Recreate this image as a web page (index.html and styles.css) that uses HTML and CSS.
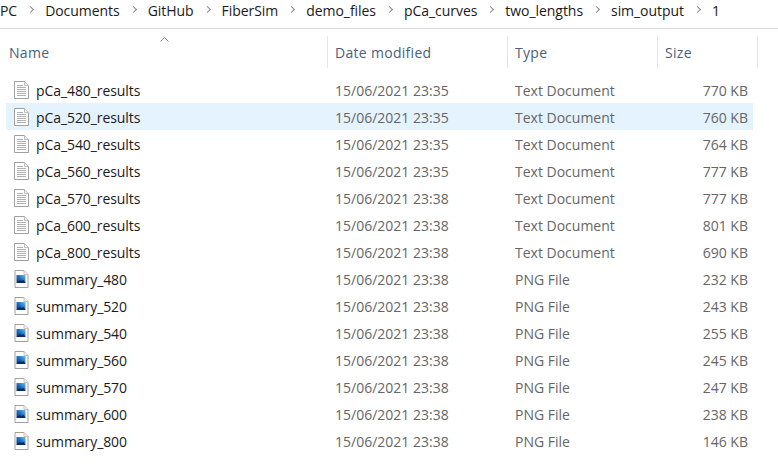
FILE: index.html
```html
<!DOCTYPE html>
<html lang="en">
<head>
    <meta charset="UTF-8">
    <meta name="viewport" content="width=device-width, initial-scale=1.0">
    <title>1</title>
    <link rel="stylesheet" href="styles.css">
</head>
<body>
    <svg class="defs" width="0" height="0">
        <defs>
            <linearGradient id="pic" x1="1" y1="0" x2="0" y2="1">
                <stop offset="0" stop-color="#6cc4f0"/>
                <stop offset=".5" stop-color="#1c6fbe"/>
                <stop offset="1" stop-color="#0b2f74"/>
            </linearGradient>
        </defs>
        <symbol id="txt" viewBox="0 0 15 18">
            <path d="M.5.5h10l4 4v13H.5z" fill="#fff" stroke="#a0a0a0"/>
            <path d="M10.5.5v4h4" fill="#f0f0f0" stroke="#bdbdbd"/>
            <path d="M3 4.5h6M3 6.5h9M3 8.5h9M3 10.5h9M3 12.5h9M3 14.5h9" stroke="#b0b0b0" fill="none"/>
        </symbol>
        <symbol id="png" viewBox="0 0 14 18">
            <path d="M.5.5h9l4 4v13H.5z" fill="#fff" stroke="#a0a0a0"/>
            <path d="M9.5.5v4h4" fill="#f0f0f0" stroke="#c4c4c4"/>
            <rect x="2" y="5" width="9" height="8" fill="url(#pic)"/>
            <path d="M2 13l3-3 2 1 2-1 2 3z" fill="#0a2a66"/>
        </symbol>
    </svg>

    <nav class="crumbs">
        <span>PC</span><i class="chev"></i>
        <span>Documents</span><i class="chev"></i>
        <span>GitHub</span><i class="chev"></i>
        <span>FiberSim</span><i class="chev"></i>
        <span>demo_files</span><i class="chev"></i>
        <span>pCa_curves</span><i class="chev"></i>
        <span>two_lengths</span><i class="chev"></i>
        <span>sim_output</span><i class="chev"></i>
        <span>1</span>
    </nav>

    <div class="head">
        <div class="col name-col">Name<svg class="sort" width="9" height="5"><path d="M.5 4.5l4-4 4 4" fill="none" stroke="#8a8a8a"/></svg></div>
        <div class="col">Date modified</div>
        <div class="col">Type</div>
        <div class="col">Size</div>
    </div>

    <div class="list">
        <div class="row"><svg class="ico"><use href="#txt"/></svg><span class="fname">pCa_480_results</span><span>15/06/2021 23:35</span><span>Text Document</span><span class="size">770 KB</span></div>
        <div class="row selected"><svg class="ico"><use href="#txt"/></svg><span class="fname">pCa_520_results</span><span>15/06/2021 23:35</span><span>Text Document</span><span class="size">760 KB</span></div>
        <div class="row"><svg class="ico"><use href="#txt"/></svg><span class="fname">pCa_540_results</span><span>15/06/2021 23:35</span><span>Text Document</span><span class="size">764 KB</span></div>
        <div class="row"><svg class="ico"><use href="#txt"/></svg><span class="fname">pCa_560_results</span><span>15/06/2021 23:35</span><span>Text Document</span><span class="size">777 KB</span></div>
        <div class="row"><svg class="ico"><use href="#txt"/></svg><span class="fname">pCa_570_results</span><span>15/06/2021 23:38</span><span>Text Document</span><span class="size">777 KB</span></div>
        <div class="row"><svg class="ico"><use href="#txt"/></svg><span class="fname">pCa_600_results</span><span>15/06/2021 23:38</span><span>Text Document</span><span class="size">801 KB</span></div>
        <div class="row"><svg class="ico"><use href="#txt"/></svg><span class="fname">pCa_800_results</span><span>15/06/2021 23:38</span><span>Text Document</span><span class="size">690 KB</span></div>
        <div class="row"><svg class="ico"><use href="#png"/></svg><span class="fname">summary_480</span><span>15/06/2021 23:38</span><span>PNG File</span><span class="size">232 KB</span></div>
        <div class="row"><svg class="ico"><use href="#png"/></svg><span class="fname">summary_520</span><span>15/06/2021 23:38</span><span>PNG File</span><span class="size">243 KB</span></div>
        <div class="row"><svg class="ico"><use href="#png"/></svg><span class="fname">summary_540</span><span>15/06/2021 23:38</span><span>PNG File</span><span class="size">255 KB</span></div>
        <div class="row"><svg class="ico"><use href="#png"/></svg><span class="fname">summary_560</span><span>15/06/2021 23:38</span><span>PNG File</span><span class="size">245 KB</span></div>
        <div class="row"><svg class="ico"><use href="#png"/></svg><span class="fname">summary_570</span><span>15/06/2021 23:38</span><span>PNG File</span><span class="size">247 KB</span></div>
        <div class="row"><svg class="ico"><use href="#png"/></svg><span class="fname">summary_600</span><span>15/06/2021 23:38</span><span>PNG File</span><span class="size">238 KB</span></div>
        <div class="row"><svg class="ico"><use href="#png"/></svg><span class="fname">summary_800</span><span>15/06/2021 23:38</span><span>PNG File</span><span class="size">146 KB</span></div>
    </div>
</body>
</html>
```

FILE: styles.css
```css
body{
    margin: 0;
    background: #fff;
    font-family: "Open Sans", "Noto Sans", sans-serif;
    font-size: 14px;
    color: #1a1a1a;
    overflow: hidden;
}
.defs{
    display: block;
    height: 0;
}
.crumbs{
    height: 29px;
    box-sizing: border-box;
    border-bottom: 1px solid #d9d9d9;
    display: flex;
    align-items: flex-start;
    gap: 12px;
    padding-top: 1px;
    line-height: 19px;
    letter-spacing: -0.05px;
    white-space: nowrap;
}
.chev{
    width: 5px;
    height: 5px;
    margin-top: 6px;
    margin-left: -1px;
    border-top: 1px solid #8a8a8a;
    border-right: 1px solid #8a8a8a;
    transform: rotate(45deg);
    box-sizing: border-box;
}
.head{
    display: grid;
    grid-template-columns: 328px 180px 150px 100px;
    height: 32px;
    margin-top: 7px;
    color: #4c607a;
    letter-spacing: 0.3px;
}
.col{
    border-right: 1px solid #e5e5e5;
    padding: 1px 0 0 7px;
    display: flex;
    align-items: center;
    position: relative;
}
.name-col{
    padding-left: 9px;
}
.sort{
    position: absolute;
    left: 160px;
    top: 1px;
}
.list{
    margin-top: 8px;
    margin-left: 6px;
    width: 747px;
}
.row{
    display: grid;
    grid-template-columns: 22px 299px 180px 150px 83px;
    align-items: center;
    height: 27px;
    padding-left: 8px;
    box-sizing: border-box;
    color: #666;
}
.row span{
    padding-top: 2px;
}
.selected{
    background: #e5f3ff;
}
.ico{
    width: 15px;
    height: 18px;
}
.fname{
    color: #1a1a1a;
    letter-spacing: -0.08px;
}
.size{
    text-align: right;
}
```
